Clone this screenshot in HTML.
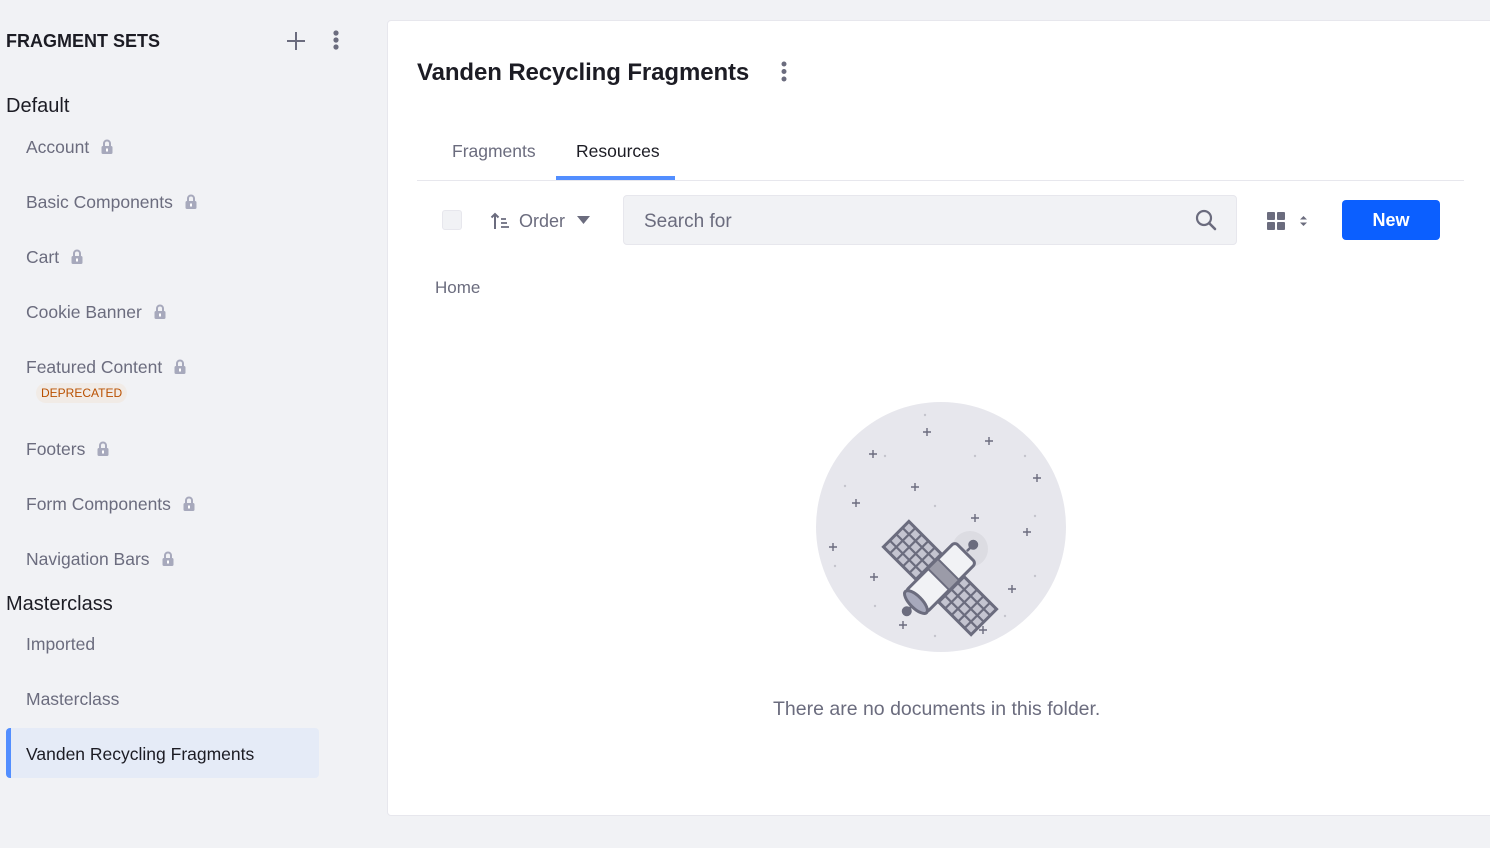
<!DOCTYPE html>
<html><head><meta charset="utf-8"><style>
*{margin:0;padding:0;box-sizing:border-box}
body{width:1490px;height:848px;background:#f1f2f5;font-family:"Liberation Sans",sans-serif;position:relative;overflow:hidden;color:#272833}
.a{position:absolute;white-space:nowrap}
.item{position:absolute;left:26px;font-size:17.5px;color:#6b6c7e}
.lock{display:inline-block;vertical-align:middle;margin-left:12px;margin-top:-4px}
.card{position:absolute;left:387px;top:20px;width:1110px;height:796px;background:#fff;border:1px solid #e7e7ed;border-radius:4px}
</style></head><body>
<div class="a" style="left:6px;top:31px;font-size:18px;font-weight:600;color:#1c1c24">FRAGMENT SETS</div>
<svg class="a" style="left:285px;top:30px" width="22" height="22"><path d="M11 2v18M2 11h18" stroke="#6b6c7e" stroke-width="2"/></svg>
<svg class="a" style="left:330px;top:29px" width="12" height="24"><circle cx="6" cy="4" r="2.6" fill="#6b6c7e"/><circle cx="6" cy="11" r="2.6" fill="#6b6c7e"/><circle cx="6" cy="18" r="2.6" fill="#6b6c7e"/></svg>
<div class="a" style="left:6px;top:95px;font-size:20px;color:#1c1c24">Default</div>
<div class="item" style="top:137px">Account<svg class="lock" width="12" height="15"><path d="M3 7V4.5a3 3 0 0 1 6 0V7" stroke="#a7a9bc" stroke-width="2" fill="none"/><rect x="0.5" y="7" width="11" height="8" rx="1.5" fill="#a7a9bc"/><rect x="5" y="9.5" width="2" height="3" fill="#fff"/></svg></div>
<div class="item" style="top:192px">Basic Components<svg class="lock" width="12" height="15"><path d="M3 7V4.5a3 3 0 0 1 6 0V7" stroke="#a7a9bc" stroke-width="2" fill="none"/><rect x="0.5" y="7" width="11" height="8" rx="1.5" fill="#a7a9bc"/><rect x="5" y="9.5" width="2" height="3" fill="#fff"/></svg></div>
<div class="item" style="top:247px">Cart<svg class="lock" width="12" height="15"><path d="M3 7V4.5a3 3 0 0 1 6 0V7" stroke="#a7a9bc" stroke-width="2" fill="none"/><rect x="0.5" y="7" width="11" height="8" rx="1.5" fill="#a7a9bc"/><rect x="5" y="9.5" width="2" height="3" fill="#fff"/></svg></div>
<div class="item" style="top:302px">Cookie Banner<svg class="lock" width="12" height="15"><path d="M3 7V4.5a3 3 0 0 1 6 0V7" stroke="#a7a9bc" stroke-width="2" fill="none"/><rect x="0.5" y="7" width="11" height="8" rx="1.5" fill="#a7a9bc"/><rect x="5" y="9.5" width="2" height="3" fill="#fff"/></svg></div>
<div class="item" style="top:357px">Featured Content<svg class="lock" width="12" height="15"><path d="M3 7V4.5a3 3 0 0 1 6 0V7" stroke="#a7a9bc" stroke-width="2" fill="none"/><rect x="0.5" y="7" width="11" height="8" rx="1.5" fill="#a7a9bc"/><rect x="5" y="9.5" width="2" height="3" fill="#fff"/></svg></div>
<div class="a" style="left:36px;top:383px;height:20px;padding:0 5px;border-radius:10px;background:#f1ebe6;color:#b95000;font-size:12px;line-height:20px">DEPRECATED</div>
<div class="item" style="top:439px">Footers<svg class="lock" width="12" height="15"><path d="M3 7V4.5a3 3 0 0 1 6 0V7" stroke="#a7a9bc" stroke-width="2" fill="none"/><rect x="0.5" y="7" width="11" height="8" rx="1.5" fill="#a7a9bc"/><rect x="5" y="9.5" width="2" height="3" fill="#fff"/></svg></div>
<div class="item" style="top:494px">Form Components<svg class="lock" width="12" height="15"><path d="M3 7V4.5a3 3 0 0 1 6 0V7" stroke="#a7a9bc" stroke-width="2" fill="none"/><rect x="0.5" y="7" width="11" height="8" rx="1.5" fill="#a7a9bc"/><rect x="5" y="9.5" width="2" height="3" fill="#fff"/></svg></div>
<div class="item" style="top:549px">Navigation Bars<svg class="lock" width="12" height="15"><path d="M3 7V4.5a3 3 0 0 1 6 0V7" stroke="#a7a9bc" stroke-width="2" fill="none"/><rect x="0.5" y="7" width="11" height="8" rx="1.5" fill="#a7a9bc"/><rect x="5" y="9.5" width="2" height="3" fill="#fff"/></svg></div>
<div class="a" style="left:6px;top:593px;font-size:20px;color:#1c1c24">Masterclass</div>
<div class="item" style="top:634px">Imported</div>
<div class="item" style="top:689px">Masterclass</div>
<div class="a" style="left:6px;top:728px;width:313px;height:50px;background:#e5ebf7;border-radius:4px;border-left:5px solid #528eff"></div>
<div class="item" style="top:744px;color:#1c1c24;font-weight:500">Vanden Recycling Fragments</div>

<div class="card"></div>
<div class="a" style="left:417px;top:59px;font-size:24px;font-weight:bold;color:#1c1c24;letter-spacing:-0.1px">Vanden Recycling Fragments</div>
<svg class="a" style="left:778px;top:60px" width="12" height="24"><circle cx="6" cy="4" r="2.5" fill="#6b6c7e"/><circle cx="6" cy="11.5" r="2.5" fill="#6b6c7e"/><circle cx="6" cy="19" r="2.5" fill="#6b6c7e"/></svg>
<div class="a" style="left:452px;top:141px;font-size:17.5px;color:#6b6c7e">Fragments</div>
<div class="a" style="left:576px;top:141px;font-size:17.5px;color:#1c1c24">Resources</div>
<div class="a" style="left:417px;top:180px;width:1047px;height:1px;background:#e7e7ed"></div>
<div class="a" style="left:556px;top:176px;width:119px;height:4px;background:#528eff"></div>

<div class="a" style="left:442px;top:210px;width:20px;height:20px;background:#f1f2f5;border:1px solid #e7e7ed;border-radius:3px"></div>
<svg class="a" style="left:490px;top:211px" width="22" height="20"><path d="M5 18V3M1.5 6.5L5 3l3.5 3.5" stroke="#6b6c7e" stroke-width="2" fill="none"/><path d="M11 8h5M11 12h6M11 16h8" stroke="#6b6c7e" stroke-width="1.8"/></svg>
<div class="a" style="left:519px;top:211px;font-size:18px;color:#6b6c7e">Order</div>
<svg class="a" style="left:577px;top:216px" width="13" height="9"><path d="M0 0h13L6.5 8z" fill="#6b6c7e"/></svg>
<div class="a" style="left:623px;top:195px;width:614px;height:50px;background:#f1f2f5;border:1px solid #e7e7ed;border-radius:4px"></div>
<div class="a" style="left:644px;top:211px;font-size:19px;color:#6b6c7e">Search for</div>
<svg class="a" style="left:1195px;top:209px" width="22" height="22"><circle cx="9" cy="9" r="7" stroke="#6b6c7e" stroke-width="2.2" fill="none"/><path d="M14 14l6 6" stroke="#6b6c7e" stroke-width="2.6" stroke-linecap="round"/></svg>
<svg class="a" style="left:1266px;top:211px" width="20" height="20"><rect x="1" y="1" width="8" height="8" rx="1" fill="#6b6c7e"/><rect x="11" y="1" width="8" height="8" rx="1" fill="#6b6c7e"/><rect x="1" y="11" width="8" height="8" rx="1" fill="#6b6c7e"/><rect x="11" y="11" width="8" height="8" rx="1" fill="#6b6c7e"/></svg>
<svg class="a" style="left:1299px;top:214px" width="9" height="14"><path d="M1 5.5L4.5 2 8 5.5zM1 8.5L4.5 12 8 8.5z" fill="#6b6c7e"/></svg>
<div class="a" style="left:1342px;top:200px;width:98px;height:40px;background:#0b5fff;border-radius:4px;color:#fff;font-size:18px;font-weight:600;text-align:center;line-height:41px">New</div>
<div class="a" style="left:435px;top:278px;font-size:17px;color:#6b6c7e">Home</div>

<svg class="a" style="left:816px;top:402px" width="250" height="250" viewBox="816 402 250 250">
<circle cx="941" cy="527" r="125" fill="#e7e7ed"/>
<g stroke="#6b6c7e" stroke-width="1.4">
<path d="M923 432h8M927 428v8M985 441h8M989 437v8M869 454h8M873 450v8M1033 478h8M1037 474v8M911 487h8M915 483v8M852 503h8M856 499v8M971 518h8M975 514v8M1023 532h8M1027 528v8M829 547h8M833 543v8M870 577h8M874 573v8M1008 589h8M1012 585v8M899 625h8M903 621v8M979 630h8M983 626v8"/>
</g>
<g fill="#c4c4cd"><circle cx="925" cy="415" r="1.2"/><circle cx="885" cy="456" r="1.2"/><circle cx="975" cy="456" r="1.2"/><circle cx="1025" cy="456" r="1.2"/><circle cx="845" cy="486" r="1.2"/><circle cx="935" cy="506" r="1.2"/><circle cx="1035" cy="516" r="1.2"/><circle cx="835" cy="566" r="1.2"/><circle cx="1035" cy="576" r="1.2"/><circle cx="875" cy="606" r="1.2"/><circle cx="1005" cy="616" r="1.2"/><circle cx="935" cy="636" r="1.2"/></g>
<circle cx="970" cy="549" r="18" fill="#dcdce2"/>
<g transform="translate(940 578) rotate(-45)">
<line x1="38" y1="0" x2="46" y2="0" stroke="#6b6c7e" stroke-width="2.5"/>
<circle cx="47" cy="0" r="5" fill="#6b6c7e"/>
<line x1="-38" y1="0" x2="-46" y2="0" stroke="#6b6c7e" stroke-width="2.5"/>
<circle cx="-47" cy="0" r="5" fill="#6b6c7e"/>
<g fill="#c4c4d0" stroke="#6b6c7e" stroke-width="3">
<rect x="-18" y="-62" width="36" height="46"/>
<rect x="-18" y="16" width="36" height="46"/>
</g>
<g stroke="#6b6c7e" stroke-width="2.2">
<path d="M-18 -52.8h36M-18 -43.6h36M-18 -34.4h36M-18 -25.2h36M-9 -62v46M0 -62v46M9 -62v46M-18 25.2h36M-18 34.4h36M-18 43.6h36M-18 52.8h36M-9 16v46M0 16v46M9 16v46"/>
</g>
<rect x="-34" y="-15" width="70" height="30" rx="4" fill="#f1f2f5" stroke="#6b6c7e" stroke-width="3"/>
<rect x="-2" y="-15" width="14" height="30" fill="#9b9ba8" stroke="#6b6c7e" stroke-width="2"/>
<ellipse cx="-34" cy="0" rx="6" ry="15" fill="#a7a9bc" stroke="#6b6c7e" stroke-width="3"/>
</g>
</svg>
<div class="a" style="left:773px;top:698px;font-size:19.5px;color:#6b6c7e">There are no documents in this folder.</div>
</body></html>
